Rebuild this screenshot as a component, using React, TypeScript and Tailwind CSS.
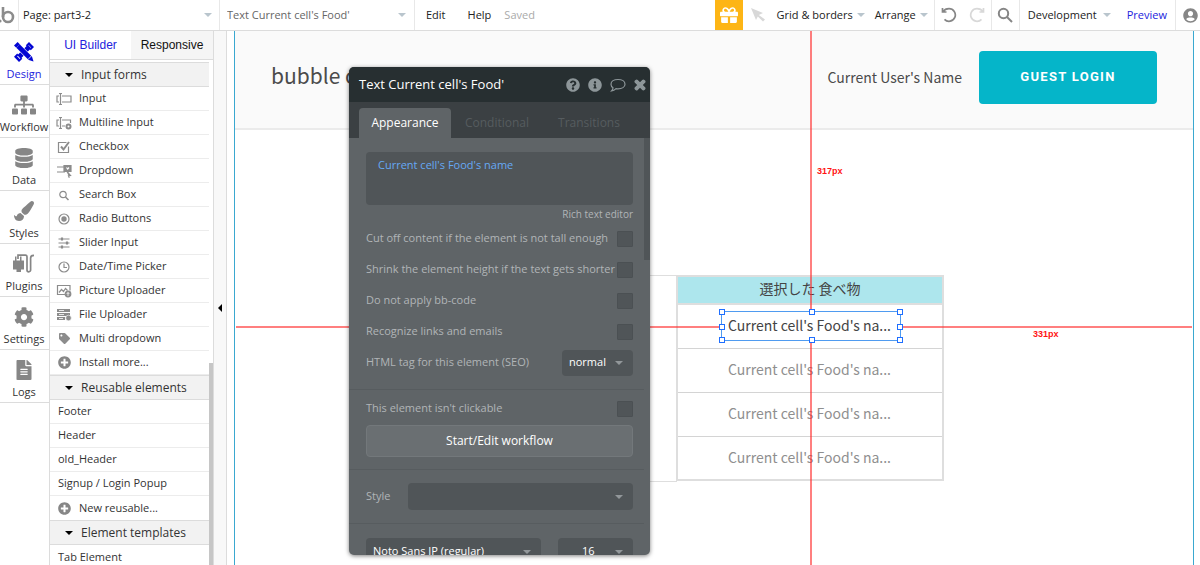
import React from 'react';
import {
    FaSitemap,
    FaDatabase,
    FaPaintBrush,
    FaCog,
    FaFileAlt,
    FaTag,
    FaPlusCircle,
    FaQuestionCircle,
    FaInfoCircle,
    FaTimes,
    FaGift,
    FaUserCircle,
} from 'react-icons/fa';

type IconProps = { className?: string };

const Logo = () => (
    <svg viewBox="0 0 18 30" className="w-[18px] h-[30px]" fill="none" stroke="#8c8c8c" strokeWidth="2.6">
        <path d="M3 7v10" />
        <circle cx="8" cy="17" r="5" />
        <circle cx="0" cy="21" r="1.6" fill="#8c8c8c" stroke="none" />
    </svg>
);

const DesignIcon = () => (
    <svg viewBox="0 0 20 20" className="w-5 h-5">
        <path d="M5 15 15.500 4.500" fill="none" stroke="#0205d3" strokeWidth="4.600" />
        <path d="M3.200 11.500 0 14.800 5 20l3.300-3.300-1.200-1.200-1.400 1.400-2.600-2.600 1.400-1.400zM11.800 3.200 15 0l5 5-3.200 3.200-1.300-1.300L17 5.400 14.600 3l-1.500 1.500z" fill="#0205d3" />
        <path d="M0 3.600 3.600 0l3.200 3.200-3.600 3.600z" fill="#0205d3" />
        <path d="M4 4 15.500 15.500" stroke="#fff" strokeWidth="6" fill="none" />
        <path d="M4 4 15.500 15.500" stroke="#0205d3" strokeWidth="4.600" fill="none" />
        <path d="m17.800 14 1.700 5.500-5.500-1.700z" fill="#0205d3" />
    </svg>
);

const PluginIcon = () => (
    <svg viewBox="0 0 22 20" className="w-[22px] h-5">
        <path d="M0 6.500h2V2.500h1.500v4h3.500V2.500h1.500v4h2.500v9H8v2.500H3.500v-2.500H0z" fill="#868686" />
        <path d="M5 5V1.200h7.500q1.500 0 1.500 1.500V16a1.800 1.800 0 0 0 3.600 0V4q0-2.600 3.400-2.600" fill="none" stroke="#868686" strokeWidth="1.700" />
    </svg>
);

const Glyph = ({ children }: { children: React.ReactNode }) => (
    <svg viewBox="0 0 16 14" className="w-4 h-3.5" fill="none" stroke="#8c8c8c" strokeWidth="1.200">
        {children}
    </svg>
);

const formItems = [
    {
        label: 'Input',
        icon: <Glyph><path d="M3 4H1v6h2M6 4h9v6H6M3 1.500h3M3 12.500h3M4.500 1.500v11" /></Glyph>,
    },
    {
        label: 'Multiline Input',
        icon: <Glyph><path d="M3 4H1v6h2M6 4h8.500v3M6 10h3M3 1.500h3M3 12.500h3M4.500 1.500v11" /><circle cx="12.500" cy="10.500" r="2" strokeWidth="2" /></Glyph>,
    },
    {
        label: 'Checkbox',
        icon: <Glyph><path d="M12.500 6.500v6H2.500v-10h8" /><path d="m5 6.500 2.500 3L13 2" strokeWidth="2" /></Glyph>,
    },
    {
        label: 'Dropdown',
        icon: <Glyph><path d="M1 3h8M1 8h8" /><path d="M8 1.500h7v6h-7zM10.500 7l4 4.500-2 .2.8 2" fill="#8c8c8c" /><path d="m10.500 3.500 1.200 1.500 1.300-1.500" stroke="#fff" /></Glyph>,
    },
    {
        label: 'Search Box',
        icon: <Glyph><circle cx="7" cy="6.500" r="3.200" /><path d="m9.500 9 3 3" strokeWidth="1.500" /></Glyph>,
    },
    {
        label: 'Radio Buttons',
        icon: <Glyph><circle cx="8" cy="7" r="5" /><circle cx="8" cy="7" r="2.700" fill="#8c8c8c" stroke="none" /></Glyph>,
    },
    {
        label: 'Slider Input',
        icon: <Glyph><path d="M2.500 3h11M2.500 7h11M2.500 11h11" /><path d="M6 1.500v3M11 5.500v3M6 9.500v3" strokeWidth="2.200" /></Glyph>,
    },
    {
        label: 'Date/Time Picker',
        icon: <Glyph><circle cx="8" cy="7" r="5" /><path d="M8 3.500V7.500h3" /></Glyph>,
    },
    {
        label: 'Picture Uploader',
        icon: <Glyph><path d="M9 10.500H1.500v-9h12.500v5M3 8.500l2.500-3 2 2 2-3 2 2" /><circle cx="12" cy="10" r="2.800" fill="#8c8c8c" /><path d="M12 12V8.500M10.700 10 12 8.500l1.300 1.500" stroke="#fff" strokeWidth=".8" /></Glyph>,
    },
    {
        label: 'File Uploader',
        icon: <Glyph><path d="M1 2.500h13M1 6.500h13M1 10.500h8" strokeWidth="2.800" /><path d="M3 2.500h5M3 6.500h5M3 10.500h4" stroke="#fff" strokeWidth=".8" /><circle cx="12.500" cy="10" r="2.800" fill="#8c8c8c" stroke="#fff" strokeWidth=".6" /></Glyph>,
    },
    { label: 'Multi dropdown', icon: <FaTag className="w-[11px] h-[11px] text-[#8c8c8c]" /> },
    { label: 'Install more...', icon: <FaPlusCircle className="w-[13px] h-[13px] text-[#868686]" /> },
];

const reusableItems = ['Footer', 'Header', 'old_Header', 'Signup / Login Popup'];

const navItems = [
    { label: 'Design', icon: <DesignIcon />, active: true },
    { label: 'Workflow', icon: <FaSitemap className="w-6 h-6" /> },
    { label: 'Data', icon: <FaDatabase className="w-[18px] h-5" /> },
    { label: 'Styles', icon: <FaPaintBrush className="w-5 h-5" /> },
    { label: 'Plugins', icon: <PluginIcon /> },
    { label: 'Settings', icon: <FaCog className="w-5 h-5" /> },
    { label: 'Logs', icon: <FaFileAlt className="w-5 h-5" /> },
];

const Caret = ({ className = '' }: IconProps) => (
    <svg viewBox="0 0 8 4" className={`w-2 h-1 shrink-0 pointer-events-none ${className}`} fill="currentColor">
        <path d="M0 0h8L4 4z" />
    </svg>
);

const SectionHeader = ({ title }: { title: string }) => (
    <button className="w-full h-[25px] flex items-center gap-2 pl-[15px] bg-[#f2f2f2] border-y border-[#dcdcdc] text-xs text-[#333]">
        <Caret className="text-black" />
        {title}
    </button>
);

const TopBar = () => (
    <header className="h-[31px] shrink-0 flex items-stretch bg-white border-b border-[#dcdcdc] text-[11px] text-[#222]">
        <a href="#home" aria-label="Home" className="border-r border-[#e8e8e8]"><Logo /></a>
        <div className="relative w-[201px] flex items-center border-r border-[#e8e8e8]">
            <select aria-label="Page" className="appearance-none w-full h-full pl-1 bg-transparent">
                <option>Page: part3-2</option>
            </select>
            <Caret className="absolute right-[7px] text-[#b9c5cd]" />
        </div>
        <div className="relative w-[195px] flex items-center border-r border-[#e8e8e8] text-[#666]">
            <select aria-label="Element" className="appearance-none w-full h-full pl-[7px] bg-transparent">
                <option>Text Current cell's Food'</option>
            </select>
            <Caret className="absolute right-2 text-[#b9c5cd]" />
        </div>
        <nav className="flex items-center pl-[11px]">
            <button className="mr-[22px]">Edit</button>
            <button className="mr-[13px]">Help</button>
            <span className="text-[#aaa]">Saved</span>
        </nav>
        <div className="flex-1" />
        <button aria-label="Gifts" className="w-7 flex items-center justify-center bg-[#fdb515] text-white">
            <FaGift className="w-5 h-[18px]" />
        </button>
        <button aria-label="Pointer" className="w-[34px] pl-2">
            <svg viewBox="0 0 14 14" className="w-3.5 h-3.5" fill="#d8d8d8"><path d="m0 0 12 5-4.200 2L14 11.500 12 13.500 6.800 8.500 5 12z" /></svg>
        </button>
        <button className="flex items-center gap-1">Grid &amp; borders <Caret className="text-[#b9c5cd]" /></button>
        <button className="flex items-center gap-1 pl-2.5 pr-1.5 border-r border-[#e8e8e8]">Arrange <Caret className="text-[#b9c5cd]" /></button>
        <button aria-label="Undo" className="w-7 flex items-center justify-center">
            <svg viewBox="0 0 16 16" className="w-4 h-4" fill="none" stroke="#868686" strokeWidth="1.700"><path d="M1.500 1v4h4M2 4.800Q4 1.700 8 1.700a6.300 6.300 0 1 1-4.500 10.700" /></svg>
        </button>
        <button aria-label="Redo" className="w-[29px] flex items-center justify-center border-r border-[#e8e8e8]">
            <svg viewBox="0 0 16 16" className="w-4 h-4" fill="none" stroke="#d8d8d8" strokeWidth="1.700"><path d="M14.500 1v4h-4M14 4.800Q12 1.700 8 1.700a6.300 6.300 0 1 0 4.500 10.700" /></svg>
        </button>
        <button aria-label="Search" className="w-7 flex items-center justify-center border-r border-[#e8e8e8]">
            <svg viewBox="0 0 16 16" className="w-4 h-4" fill="none" stroke="#868686" strokeWidth="2"><circle cx="6.500" cy="6.500" r="4.700" /><path d="m10 10 5 5" /></svg>
        </button>
        <button className="flex items-center gap-1.5 pl-2">Development <Caret className="text-[#b9c5cd]" /></button>
        <a href="#preview" className="flex items-center pl-4 pr-2 border-r border-[#e8e8e8] text-[#2323dd]">Preview</a>
        <button aria-label="Account" className="w-6 flex items-center pl-[7px] text-[#868686]"><FaUserCircle className="w-[15px] h-[15px]" /></button>
    </header>
);

const SideNav = () => (
    <nav className="w-[50px] shrink-0 border-r border-[#dcdcdc] bg-white pt-px">
        {navItems.map((item) => (
            <a
                key={item.label}
                href={`#${item.label}`}
                className={`h-[53px] flex flex-col items-center justify-end border-b border-[#dcdcdc] pr-px text-[11px] ${item.active ? 'text-[#2323dd]' : 'text-[#333]'}`}
            >
                <span className={`h-6 flex items-center ${item.active ? '' : 'text-[#868686]'}`}>{item.icon}</span>
                <span className="leading-5">{item.label}</span>
            </a>
        ))}
    </nav>
);

const Palette = () => (
    <aside className="w-[164px] shrink-0 flex flex-col border-r border-[#dcdcdc] bg-white text-[11px] text-[#333]">
        <div className="h-[29px] shrink-0 flex border-b border-[#dcdcdc] font-['Liberation_Sans',sans-serif] text-xs">
            <button className="w-[81px] text-[#2323dd]">UI Builder</button>
            <button className="flex-1 bg-[#f5f5f5] text-[#111]">Responsive</button>
        </div>
        <div className="flex-1 min-h-0 flex pt-0.5">
            <div className="flex-1 overflow-hidden">
                <SectionHeader title="Input forms" />
                {formItems.map((item) => (
                    <button key={item.label} className="w-full h-6 flex items-center border-b border-[#ececec] pl-1.5">
                        <span className="w-[23px] flex items-center justify-start"><span className="w-4 flex justify-center">{item.icon}</span></span>
                        {item.label}
                    </button>
                ))}
                <SectionHeader title="Reusable elements" />
                {reusableItems.map((name) => (
                    <button key={name} className="w-full h-6 flex items-center border-b border-[#ececec] pl-2">{name}</button>
                ))}
                <button className="w-full h-6 flex items-center pl-1.5">
                    <span className="w-[23px] flex items-center justify-start"><span className="w-4 flex justify-center"><FaPlusCircle className="w-[13px] h-[13px] text-[#868686]" /></span></span>
                    New reusable...
                </button>
                <SectionHeader title="Element templates" />
                <button className="w-full h-6 flex items-center pl-2">Tab Element</button>
            </div>
            <div className="w-1 flex flex-col justify-end">
                <div className="h-[202px] bg-[#c6c6c6]" />
            </div>
        </div>
    </aside>
);

const CheckRow = ({ label }: { label: string }) => (
    <label className="h-[31px] flex items-center justify-between">
        {label}
        <input type="checkbox" className="appearance-none w-4 h-4 rounded-[1px] bg-[#505558] border border-[#4b5053]" />
    </label>
);

const PropertyEditor = () => (
    <section className="absolute z-20 left-[122px] top-9 w-[301px] h-[488px] flex flex-col overflow-hidden rounded-[5px] bg-[#5f6467] text-[11px] text-[#b1b5b7] shadow-[0_1px_4px_rgba(0,0,0,0.5)]">
        <div className="h-[35px] shrink-0 flex items-center bg-[#272f31] pl-2.5 pr-1 text-[#8d9699]">
            <h2 className="flex-1 text-[13px] text-white">Text Current cell's Food'</h2>
            <div className="flex items-center gap-2">
                <button aria-label="Help"><FaQuestionCircle className="w-3.5 h-3.5" /></button>
                <button aria-label="Info"><FaInfoCircle className="w-3.5 h-3.5" /></button>
                <button aria-label="Comment">
                    <svg viewBox="0 0 16 14" className="w-4 h-3.5" fill="none" stroke="currentColor" strokeWidth="1.200"><path d="M8 1.500c4 0 7 2 7 4.700s-3 4.700-7 4.700q-1 0-2-.2Q4 12.700 1.500 13q1.500-1.500 1.500-3.200C1.700 9 1 7.800 1 6.200 1 3.500 4 1.500 8 1.500z" /></svg>
                </button>
                <button aria-label="Close">
                    <FaTimes className="w-3 h-3.5" stroke="currentColor" strokeWidth="50" />
                </button>
            </div>
        </div>
        <div className="h-9 shrink-0 flex items-end bg-[#3b4043] pl-2.5 text-xs text-[#565c5f]">
            <button className="w-[92px] h-[30px] rounded-t bg-[#5f6467] text-white">Appearance</button>
            <button className="w-[92px] h-[30px]">Conditional</button>
            <button className="w-[92px] h-[30px]">Transitions</button>
        </div>
        <div className="flex-1 min-h-0 flex">
            <div className="flex-1 overflow-hidden">
                <div className="pl-[17px] pr-[11px] pt-3.5 pb-[11px] border-b border-[#575c5f]">
                    <textarea
                        aria-label="Text"
                        readOnly
                        defaultValue="Current cell's Food's name"
                        className="block w-full h-[53px] resize-none rounded-sm bg-[#505558] px-3 pt-1 text-[11px] leading-[18px] text-[#66a9f5]"
                    />
                    <a href="#rich" className="block text-right text-[10px] leading-[18px]">Rich text editor</a>
                    <CheckRow label="Cut off content if the element is not tall enough" />
                    <CheckRow label="Shrink the element height if the text gets shorter" />
                    <CheckRow label="Do not apply bb-code" />
                    <CheckRow label="Recognize links and emails" />
                    <label className="h-[31px] flex items-center justify-between">
                        HTML tag for this element (SEO)
                        <span className="relative flex items-center w-[71px]">
                            <select className="appearance-none w-full h-[26px] rounded-sm bg-[#505558] pl-[7px] font-medium text-white">
                                <option>normal</option>
                            </select>
                            <Caret className="absolute right-2.5 text-[#92979a]" />
                        </span>
                    </label>
                </div>
                <div className="pl-[17px] pr-[11px] pt-[3px] pb-3 border-b border-[#575c5f]">
                    <CheckRow label="This element isn't clickable" />
                    <button className="mt-px w-full h-8 rounded-sm border border-[#73787b] bg-[#6a6f72] text-xs text-white">Start/Edit workflow</button>
                </div>
                <div className="pl-[17px] pr-[11px] py-[13px] border-b border-[#575c5f]">
                    <label className="flex items-center justify-between">
                        Style
                        <span className="relative flex items-center w-[225px]">
                            <select className="appearance-none w-full h-[27px] rounded-sm bg-[#505558]">
                                <option></option>
                            </select>
                            <Caret className="absolute right-2.5 text-[#92979a]" />
                        </span>
                    </label>
                </div>
                <div className="flex justify-between pl-[17px] pr-[11px] pt-3.5 text-white">
                    <span className="relative flex items-center w-[175px]">
                        <select aria-label="Font" className="appearance-none w-full h-[27px] rounded-sm bg-[#505558] pl-[7px]">
                            <option>Noto Sans JP (regular)</option>
                        </select>
                        <Caret className="absolute right-2.5 text-[#92979a]" />
                    </span>
                    <span className="relative flex items-center w-[75px]">
                        <select aria-label="Font size" className="appearance-none w-full h-[27px] rounded-sm bg-[#505558] pl-6">
                            <option>16</option>
                        </select>
                        <Caret className="absolute right-2.5 text-[#92979a]" />
                    </span>
                </div>
            </div>
            <div className="w-1.5">
                <div className="h-[122px] bg-[#505558]" />
            </div>
        </div>
    </section>
);

const handles = [
    '-left-[3px] -top-[3px]',
    'left-[87px] -top-[3px]',
    '-right-[3px] -top-[3px]',
    '-left-[3px] top-3',
    '-right-[3px] top-3',
    '-left-[3px] -bottom-[3px]',
    'left-[87px] -bottom-[3px]',
    '-right-[3px] -bottom-[3px]',
];

const FoodTable = () => (
    <table className="absolute left-[441px] top-[244px] w-[268px] border-collapse border-2 border-[#dedede] text-center text-[#8f8f8f]">
        <thead>
            <tr className="h-7 bg-[#ade6ed] text-[#444]">
                <th className="border-b-2 border-[#dedede] p-0 pb-1 text-sm leading-5 font-normal">選択した 食べ物</th>
            </tr>
        </thead>
        <tbody>
            {[0, 1, 2, 3].map((row) => (
                <tr key={row} className="h-11">
                    <td className={`border-b border-[#d4d4d4] p-0 pb-0.5 pr-px text-sm leading-5 ${row === 0 ? 'text-[#444]' : ''}`}>Current cell's Food's na...</td>
                </tr>
            ))}
        </tbody>
    </table>
);

const Canvas = () => (
    <main className="relative flex-1 min-w-0 flex pl-[7px] pr-1.5 bg-white">
        <div className="relative flex-1 border-x border-[#3aa8d0] overflow-hidden font-['Noto_Sans_CJK_JP',sans-serif]">
            <header className="h-[99px] flex items-center justify-between border-b-2 border-[#ebebeb] bg-[#fafafa] px-9 pb-[5px] text-[#4b4b4b]">
                <h1 className="text-[21px] leading-6 pb-1">bubble c</h1>
                <div className="flex items-center gap-[17px]">
                    <span className="text-sm">Current User's Name</span>
                    <button className="w-[178px] h-[53px] rounded bg-[#05b5c9] font-['Roboto',sans-serif] text-[13px] font-bold tracking-widest text-white">GUEST LOGIN</button>
                </div>
            </header>
            <div className="absolute left-[200px] top-[244px] w-[242px] h-[207px] border border-[#dedede]" />
            <FoodTable />
            <div className="absolute left-[575px] top-0 h-[281px] w-0.5 bg-[#ff2a2a]/60" />
            <div className="absolute left-[575px] top-[309px] bottom-0 w-0.5 bg-[#ff2a2a]/60" />
            <div className="absolute left-px top-[295px] w-[485px] h-0.5 bg-[#ff2a2a]/60" />
            <div className="absolute left-[665px] right-px top-[295px] h-0.5 bg-[#ff2a2a]/60" />
            <div className="absolute left-[486px] top-[280px] w-[180px] h-[30px] border border-[#4f9bf0]">
                {handles.map((position) => (
                    <span key={position} className={`absolute w-1.5 h-1.5 border border-[#1f6fff] bg-white ${position}`} />
                ))}
            </div>
            <span className="absolute left-[582px] top-[134px] font-['Liberation_Sans',sans-serif] text-[9px] leading-3 font-bold text-[#ff1414]">317px</span>
            <span className="absolute left-[798px] top-[297px] font-['Liberation_Sans',sans-serif] text-[9px] leading-3 font-bold text-[#ff1414]">331px</span>
        </div>
        <PropertyEditor />
    </main>
);

export default function App() {
    return (
        <div className="h-screen flex flex-col overflow-hidden bg-white font-['Open_Sans',sans-serif]">
            <TopBar />
            <div className="flex-1 min-h-0 flex">
                <SideNav />
                <Palette />
                <button aria-label="Collapse panel" className="w-[13px] shrink-0 flex items-center justify-center border-r border-[#dcdcdc] bg-[#f8f8f8] pt-5">
                    <svg viewBox="0 0 4 8" className="w-1 h-2"><path d="M4 0v8L0 4z" /></svg>
                </button>
                <Canvas />
            </div>
        </div>
    );
}
